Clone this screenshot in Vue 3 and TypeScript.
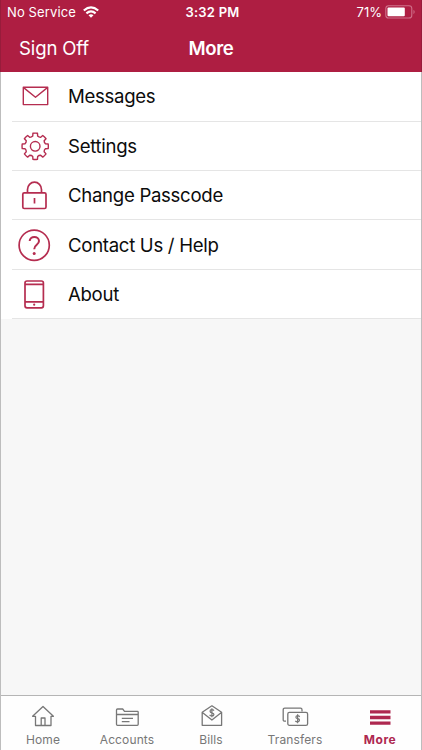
<script setup lang="ts">
interface MenuItem {
  icon: 'mail' | 'gear' | 'lock' | 'help' | 'phone'
  label: string
}

interface TabItem {
  icon: 'home' | 'accounts' | 'bills' | 'transfers' | 'more'
  label: string
}

const menu: MenuItem[] = [
  { icon: 'mail', label: 'Messages' },
  { icon: 'gear', label: 'Settings' },
  { icon: 'lock', label: 'Change Passcode' },
  { icon: 'help', label: 'Contact Us / Help' },
  { icon: 'phone', label: 'About' },
]

const tabs: TabItem[] = [
  { icon: 'home', label: 'Home' },
  { icon: 'accounts', label: 'Accounts' },
  { icon: 'bills', label: 'Bills' },
  { icon: 'transfers', label: 'Transfers' },
  { icon: 'more', label: 'More' },
]

// Outline of an eight-toothed cog centred in a 36 x 36 box.
function cogPath(): string {
  const point = (radius: number, degrees: number): string => {
    const a = (degrees * Math.PI) / 180
    return `${(18 + radius * Math.sin(a)).toFixed(2)} ${(18 - radius * Math.cos(a)).toFixed(2)}`
  }
  let d = ''
  for (let i = 0; i < 8; i++) {
    const c = i * 45
    d += `${i ? 'L' : 'M'}${point(10.5, c - 13.5)}L${point(13.2, c - 10)}`
    d += `A13.2 13.2 0 0 1 ${point(13.2, c + 10)}L${point(10.5, c + 13.5)}`
    d += `Q${point(9.6, c + 22.5)} ${point(10.5, c + 31.5)}`
  }
  return d + 'Z'
}

const cog = cogPath()
</script>

<template>
  <div class="screen">
    <header class="header">
      <div class="status">
        <div class="carrier">
          <span>No Service</span>
          <svg class="wifi" viewBox="0 0 16 12" width="16" height="12">
            <g fill="none" stroke="#fff" stroke-width="2.2">
              <path d="M.8 4.500Q8-1.800 15.200 4.500" />
              <path d="M3.400 7.300Q8 3.300 12.600 7.300" />
            </g>
            <path d="M5.500 9.200Q8 7.200 10.500 9.200L8 11.800Z" fill="#fff" />
          </svg>
        </div>
        <div class="time">3:32 PM</div>
        <div class="power">
          <span>71%</span>
          <svg viewBox="0 0 31 14" width="31" height="14">
            <rect x=".8" y=".8" width="26" height="12.200" rx="2.800" fill="none" stroke="#d0718a" stroke-width="1.100" />
            <rect x="2.500" y="2.500" width="17.300" height="8.800" rx="1" fill="#fff" />
            <path d="M28.500 4.800Q30.800 7 28.500 9.200Z" fill="#d0718a" />
          </svg>
        </div>
      </div>
      <nav class="nav">
        <button class="signoff">Sign Off</button>
        <h1 class="title">More</h1>
        <span></span>
      </nav>
    </header>

    <ul class="menu">
      <li v-for="item in menu" :key="item.label" class="row">
        <svg class="row-icon" viewBox="0 0 36 36" width="36" height="36">
          <g v-if="item.icon === 'mail'">
            <path d="M6.300 9.300H30.700V26.600H6.300ZM6.600 9.600L18.500 19.300L30.400 9.600" />
          </g>
          <g v-else-if="item.icon === 'gear'" transform="translate(.2 .3)">
            <path :d="cog" />
            <circle cx="18" cy="18" r="4.800" />
          </g>
          <g v-else-if="item.icon === 'lock'" class="heavy">
            <rect x="5.800" y="15.800" width="23.200" height="15.700" rx="1.400" />
            <path d="M10.500 15.500V12.500A7 7.300 0 0 1 24.500 12.500V15.500M17.500 21V26.500" />
          </g>
          <g v-else-if="item.icon === 'help'" class="heavy">
            <circle cx="17.200" cy="18.200" r="15.100" />
            <path d="M12.700 14C12.700 8.700 22 8.700 22 14.100C22 18 17.200 17.700 17.200 22.200" class="mark" />
            <circle cx="17.200" cy="26.500" r="1.500" class="dot" />
          </g>
          <g v-else class="heavy">
            <rect x="8" y="5" width="18.400" height="26.800" rx="2" />
            <path d="M8 8.300H26.400M8 25.800H26.400" />
            <circle cx="17.200" cy="28.700" r="1.100" class="dot" />
          </g>
        </svg>
        <span class="label">{{ item.label }}</span>
      </li>
    </ul>

    <main class="blank"></main>

    <footer class="tabs">
      <div v-for="tab in tabs" :key="tab.label" class="tab" :class="{ active: tab.icon === 'more' }">
        <svg class="tab-icon" viewBox="0 0 28 24" width="28" height="24">
          <g v-if="tab.icon === 'home'">
            <path d="M3.600 12.300L14 2.500L24.400 12.300H22V21.500H6.500V12.300ZM12.200 21.300V14H16V21.300" />
          </g>
          <g v-else-if="tab.icon === 'accounts'">
            <path d="M3.500 20.500V6Q3.500 5 4.500 5H9.700L11.500 7.400H24.500Q25.200 7.400 25.200 8.200V20.300Q25.200 21.300 24.200 21.300H4.500Q3.500 21.300 3.500 20.300M3.500 10.500H25.200M8.800 14.300H20M8.800 17.700H16.500" />
          </g>
          <g v-else-if="tab.icon === 'bills'">
            <path d="M5.200 8.300L14.900 1.800L24.600 8.300V21.300H5.200ZM5.400 8.600L14.900 16L24.400 8.600" />
            <path class="money" d="M17 6.700Q16.200 5.600 14.800 5.700C12.400 5.900 12.500 8.300 14.900 8.800C17.900 9.400 17.400 11.900 14.800 11.900Q13.400 11.900 12.600 10.800M14.900 4.300V13.200" />
          </g>
          <g v-else-if="tab.icon === 'transfers'" transform="translate(1 0)">
            <path d="M4 17.200H2.800Q1.200 17.200 1.200 15.700V5.700Q1.200 4.200 2.800 4.200H18.500Q20 4.200 20 5.800V7.500" />
            <rect x="5.800" y="8.300" width="19.800" height="13" rx="1.600" />
            <path class="money" d="M17.700 12.800Q16.800 11.600 15.500 11.700C13.300 12 13.400 14.300 15.600 14.600C18.400 15 17.700 17.800 15.400 17.800Q14.100 17.800 13.300 16.800M15.600 10.300V19.200" />
          </g>
          <path v-else class="bars" d="M4 7.800H24.500M4 13.500H24.500M4 19.200H24.500" />
        </svg>
        <span class="tab-label">{{ tab.label }}</span>
      </div>
    </footer>
  </div>
</template>

<style>
body {
  margin: 0;
}
</style>

<style scoped>
.screen {
  box-sizing: border-box;
  width: 422px;
  height: 750px;
  display: flex;
  flex-direction: column;
  background: #f7f7f7;
  border: solid #bdbdbd;
  border-width: 0 1px;
  font-family: Inter, 'Liberation Sans', sans-serif;
  color: #0c0c0c;
}

.header {
  height: 72.300px;
  margin: 0 -1px;
  flex: none;
  background: #ae1e42;
  color: #fff;
  box-sizing: border-box;
  border: solid #981c3b;
  border-width: 0 1px;
}

.status {
  height: 24px;
  display: grid;
  grid-template-columns: 1fr auto 1fr;
  align-items: center;
  padding: 0 5px 0 6px;
  font-size: 13px;
  line-height: 24px;
}

.carrier {
  display: flex;
  align-items: center;
  gap: 7px;
  letter-spacing: 0.12px;
}

.time {
  font-weight: 600;
  letter-spacing: 0.25px;
  padding-left: 2px;
}

.power {
  display: flex;
  align-items: center;
  justify-content: flex-end;
  gap: 3px;
}

.nav {
  height: 48px;
  display: grid;
  grid-template-columns: 1fr auto 1fr;
  align-items: center;
  padding: 0 18px;
}

.signoff {
  justify-self: start;
  padding: 0;
  border: 0;
  background: none;
  color: #fff;
  font: 400 18.600px/24px Inter, sans-serif;
  letter-spacing: -0.15px;
}

.title {
  margin: 0;
  font-size: 18.600px;
  line-height: 24px;
  font-weight: 600;
  letter-spacing: -0.4px;
}

.menu {
  flex: none;
  margin: 0;
  padding: 0 0 0 11px;
  list-style: none;
  background: #fff;
}

.row {
  height: 49.400px;
  box-sizing: border-box;
  border-bottom: 1px solid #e5e5e5;
  display: flex;
  align-items: center;
  gap: 15px;
  padding-left: 5px;
}

.row-icon {
  flex: none;
  fill: none;
  stroke: #b52d50;
  stroke-width: 1.400;
  stroke-linejoin: round;
}

.heavy {
  stroke-width: 1.700;
}

.mark {
  stroke-width: 2;
}

.dot {
  fill: #b52d50;
  stroke: none;
}

.label {
  font-size: 18.600px;
  line-height: 24px;
  letter-spacing: -0.3px;
}

.blank {
  flex: 1;
}

.tabs {
  flex: none;
  height: 55px;
  box-sizing: border-box;
  border-top: 1px solid #b5b5b5;
  display: grid;
  grid-template-columns: repeat(5, 1fr);
  background: #fefefe;
  color: #777;
}

.tab {
  display: flex;
  flex-direction: column;
  align-items: center;
  padding-top: 8px;
}

.tab-icon {
  flex: none;
  fill: none;
  stroke: #777;
  stroke-width: 1.300;
  stroke-linejoin: round;
}

.money {
  stroke-width: 1.200;
}

.bars {
  stroke: #ae2850;
  stroke-width: 3.300;
}

.tab-label {
  font-size: 12px;
  line-height: 16px;
  margin-top: 3.500px;
  letter-spacing: 0.12px;
}

.active {
  color: #ae2850;
  padding-left: 2px;
}

.active .tab-label {
  font-weight: 700;
  letter-spacing: 0.5px;
}
</style>
